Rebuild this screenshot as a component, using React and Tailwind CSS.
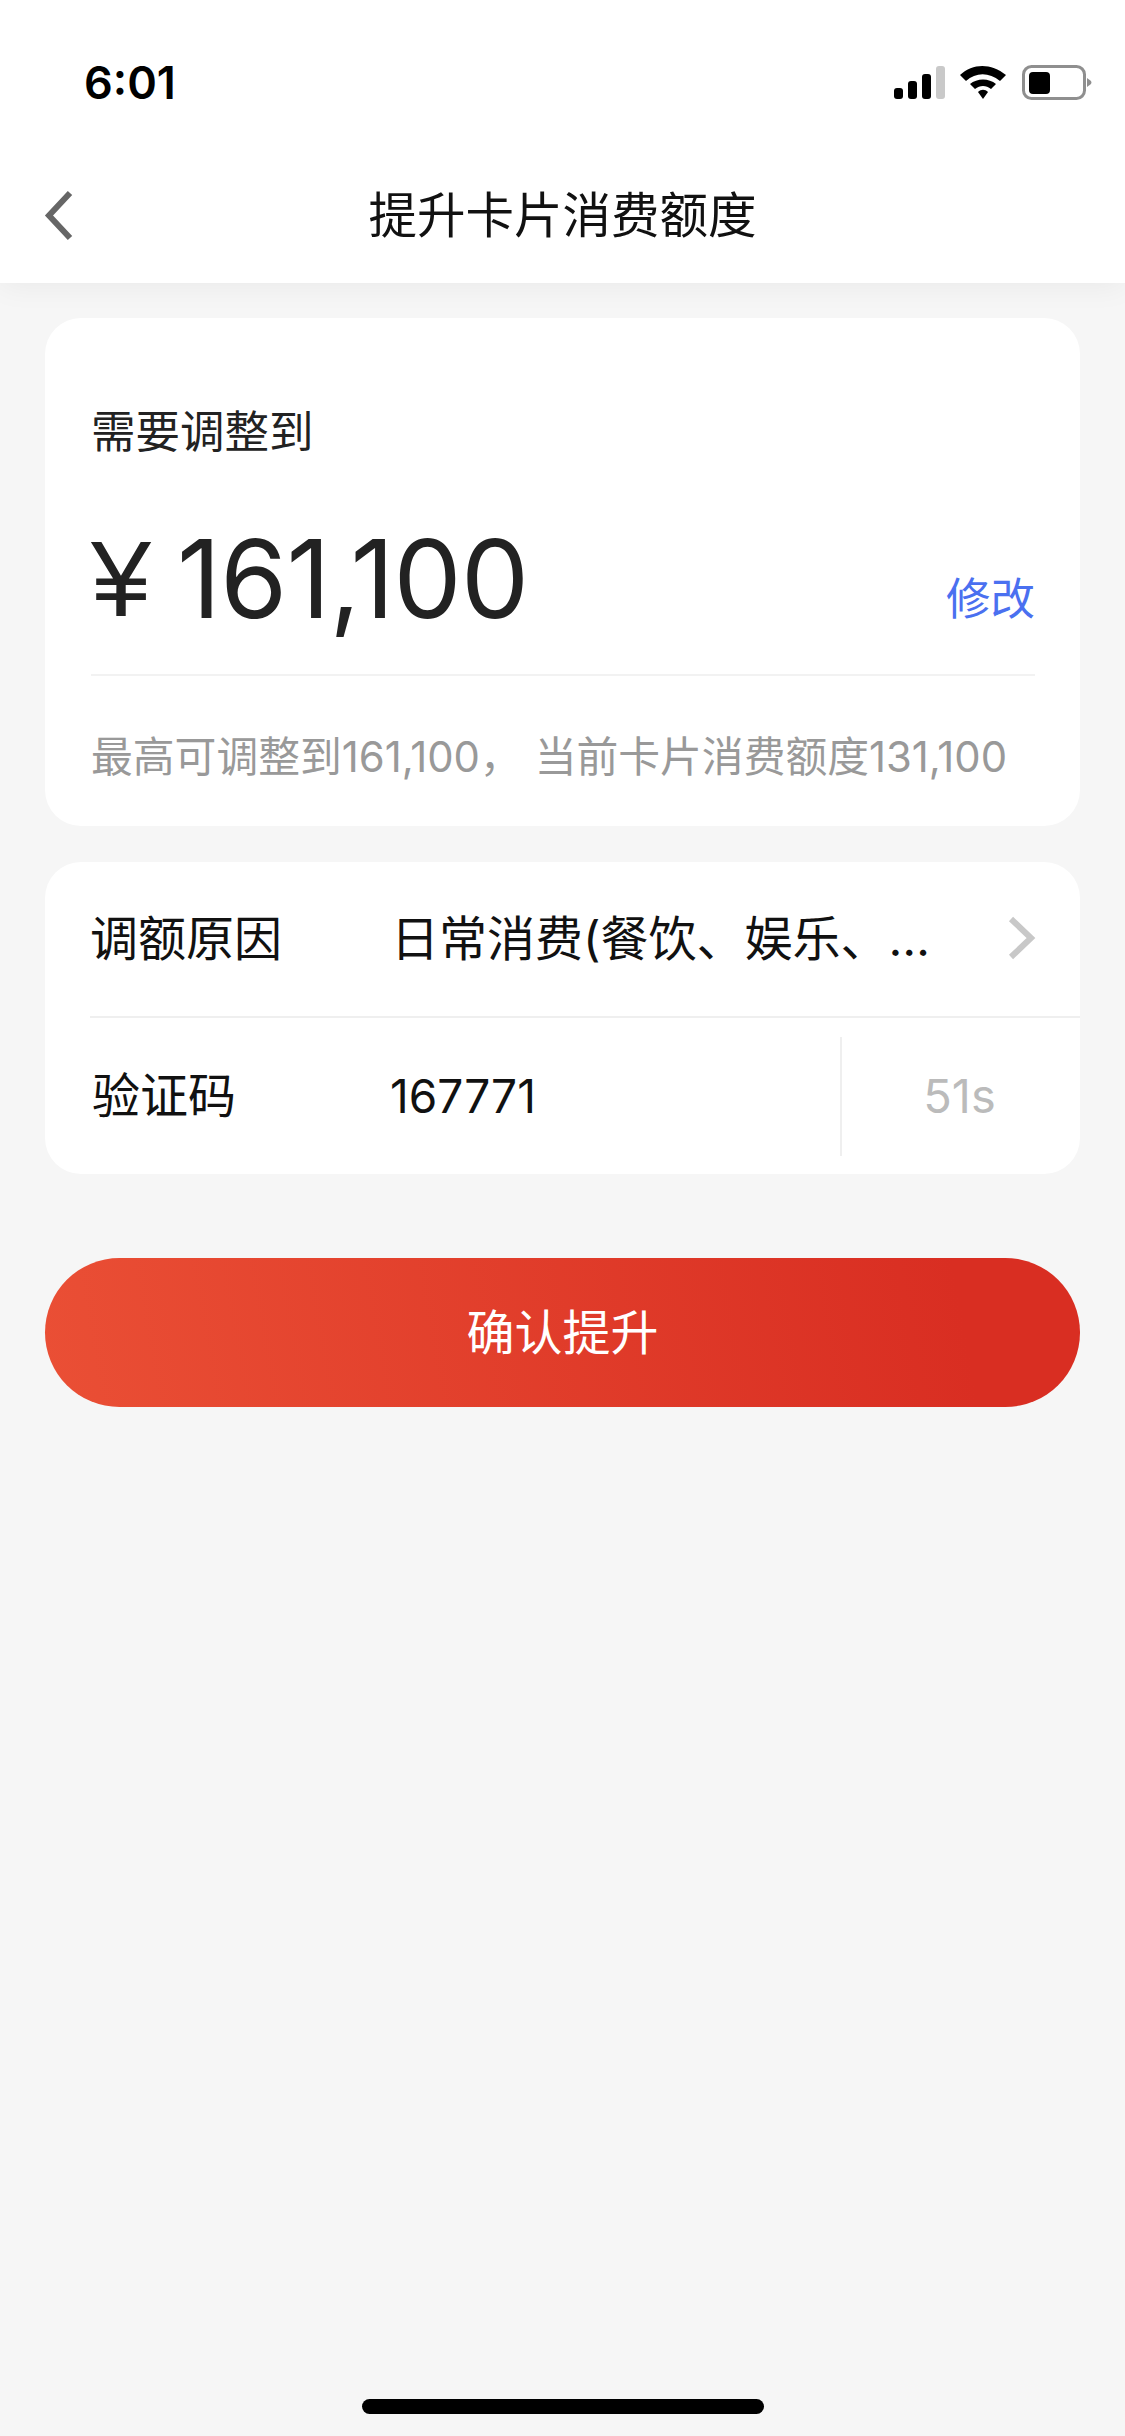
export default function App() {
  const cjk = "font-['Inter','Noto_Sans_CJK_SC',sans-serif]";
  return (
    <div className={`flex min-h-[2436px] w-[1125px] flex-col bg-[#f6f6f6] ${cjk}`}>
      <header className="z-10 flex h-[283px] flex-col bg-white shadow-[0_2px_30px_rgba(0,0,0,0.06)]">
        <div className="flex h-[162px] items-start justify-between pl-[84px] pr-[32px] pt-[60px]">
          <span className="text-[45px] leading-[45px] font-semibold text-black">6:01</span>
          <svg width="200" height="36" viewBox="0 0 200 36" className="mt-[4px]">
            <rect x="1" y="24" width="9" height="11" rx="3" fill="#000" />
            <rect x="15" y="17" width="9" height="18" rx="3" fill="#000" />
            <rect x="29" y="10" width="9" height="25" rx="3" fill="#000" />
            <rect x="43" y="2" width="9" height="33" rx="3" fill="#c9c9c9" />
            <path d="M67 11 C80 -1 98 -1 113 11 L107 17 C96 8 83 8 73 17 Z" fill="#000" />
            <path d="M77 20 C84 14 96 14 103 20 L98 25 C93 21 87 21 82 25 Z" fill="#000" />
            <path d="M85 28 C88 25 92 25 95 28 L90 35 Z" fill="#000" />
            <rect x="130.5" y="2.5" width="61" height="32" rx="8" fill="none" stroke="#8f8f8f" strokeWidth="3" />
            <rect x="136" y="8" width="21" height="22" rx="4" fill="#000" />
            <path d="M194 14 L198 17 Q199 18.500 198 20 L194 23 Z" fill="#8f8f8f" />
          </svg>
        </div>
        <div className="relative flex h-[121px] items-start justify-center pt-[24px]">
          <svg width="30" height="51" viewBox="0 0 30 51" className="absolute left-[44px] top-[28px]">
            <path d="M26 3 L5 25.500 L26 48" fill="none" stroke="#666" strokeWidth="6" />
          </svg>
          <h1 className="text-[48.500px] leading-[60px] font-normal text-[#111]">提升卡片消费额度</h1>
        </div>
      </header>

      <main className="flex flex-col px-[45px] pt-[35px]">
        <section className="h-[508px] rounded-[36px] bg-white pl-[46px] pr-[45px] pt-[84px]">
          <div className="text-[44.500px] leading-[60px] text-[#222]">需要调整到</div>
          <div className="flex h-[214px] items-end justify-between border-b-2 border-[#f2f2f2] pb-[50px]">
            <div className="flex items-end text-[#222]">
              <span className="font-['Liberation_Sans',sans-serif] text-[108px] leading-[90px]">¥</span>
              <span className="ml-[26px] text-[108px] leading-[90px] tracking-[-0.8px]">161,100</span>
            </div>
            <button className="text-[44.500px] leading-[50px] text-[#4a70f0]">修改</button>
          </div>
          <div className="mt-[55px] whitespace-pre text-[41.800px] leading-[52px] text-[#999]">最高可调整到161,100，<span className="ml-[13px]">当前卡片消费额度131,100</span></div>
        </section>

        <section className="mt-[36px] rounded-[36px] bg-white">
          <div className="ml-[45px] flex h-[156px] items-center border-b-2 border-[#efefef]">
            <span className="w-[301px] text-[48px] text-[#111]">调额原因</span>
            <span className="w-[604px] truncate text-[48px] text-[#111]">日常消费(餐饮、娱乐、…</span>
            <svg width="30" height="44" viewBox="0 0 30 44" className="ml-[11px] -mt-[2px]">
              <path d="M5 3 L25 22 L5 41" fill="none" stroke="#c8c8c8" strokeWidth="6" />
            </svg>
          </div>
          <div className="ml-[47px] flex h-[156px] items-center">
            <span className="w-[298px] text-[48px] text-[#111]">验证码</span>
            <span className="w-[450px] text-[46px] text-[#111]">167771</span>
            <div className="flex h-[119px] flex-1 items-center justify-center border-l-2 border-[#efefef] pr-[3px] text-[47px] text-[#bbb]">51s</div>
          </div>
        </section>

        <button className="mt-[84px] h-[149px] rounded-full bg-[linear-gradient(80deg,#ea4f35,#d92e22_88%)] text-[48px] text-white">确认提升</button>
      </main>

      <div className="mt-auto flex justify-center pb-[22px]">
        <div className="h-[15px] w-[402px] rounded-full bg-black" />
      </div>
    </div>
  );
}
